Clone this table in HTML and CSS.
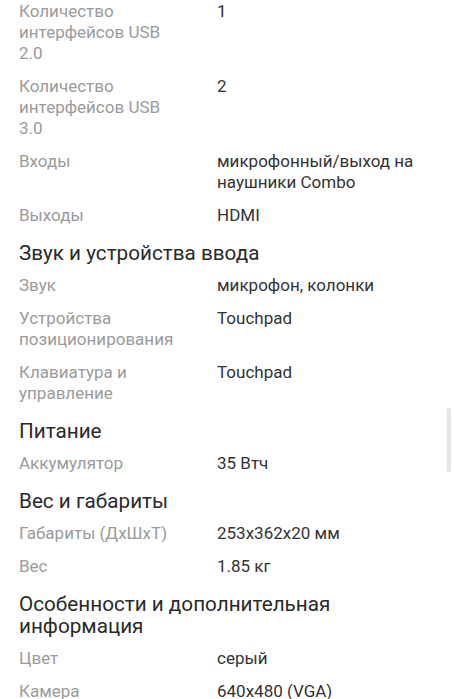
FILE: index.html
```html
<!DOCTYPE html>
<html lang="ru">
<head>
<meta charset="utf-8">
<link rel="stylesheet" href="styles.css">
</head>
<body>
<div class="specs">
  <div class="row"><div class="label">Количество интерфейсов USB 2.0</div><div class="value">1</div></div>
  <div class="row"><div class="label">Количество интерфейсов USB 3.0</div><div class="value">2</div></div>
  <div class="row"><div class="label">Входы</div><div class="value">микрофонный/выход на наушники Combo</div></div>
  <div class="row"><div class="label">Выходы</div><div class="value">HDMI</div></div>

  <h2 class="heading">Звук и устройства ввода</h2>
  <div class="row"><div class="label">Звук</div><div class="value">микрофон, колонки</div></div>
  <div class="row"><div class="label">Устройства позиционирования</div><div class="value">Touchpad</div></div>
  <div class="row"><div class="label">Клавиатура и управление</div><div class="value">Touchpad</div></div>

  <h2 class="heading">Питание</h2>
  <div class="row"><div class="label">Аккумулятор</div><div class="value">35 Втч</div></div>

  <h2 class="heading">Вес и габариты</h2>
  <div class="row"><div class="label">Габариты (ДхШхТ)</div><div class="value">253x362x20 мм</div></div>
  <div class="row"><div class="label">Вес</div><div class="value">1.85 кг</div></div>

  <h2 class="heading">Особенности и дополнительная информация</h2>
  <div class="row"><div class="label">Цвет</div><div class="value">серый</div></div>
  <div class="row"><div class="label">Камера</div><div class="value">640x480 (VGA)</div></div>
</div>
<div class="scrollbar"></div>
</body>
</html>
```

FILE: styles.css
```css
html, body {
  margin: 0;
  padding: 0;
  background: #ffffff;
  overflow: hidden;
}
body {
  font-family: Roboto, "Noto Sans", sans-serif;
  height: 699px;
  position: relative;
}
.specs {
  margin-top: -5px;
  padding: 0 19px;
}
.row {
  display: grid;
  grid-template-columns: 198px 1fr;
  padding: 6px 0;
  font-size: 17px;
  line-height: 21px;
}
.label {
  color: #9b9b9b;
  padding-right: 34px;
}
.value {
  color: #333333;
  padding-right: 20px;
}
.heading {
  margin: 10px 0 5px;
  font-size: 20.7px;
  font-weight: 400;
  line-height: 22px;
  color: #2a2a2a;
}
.scrollbar {
  position: absolute;
  right: 3px;
  top: 408px;
  width: 4px;
  height: 64px;
  background: #e6e6e6;
  border-radius: 2px;
}
```
